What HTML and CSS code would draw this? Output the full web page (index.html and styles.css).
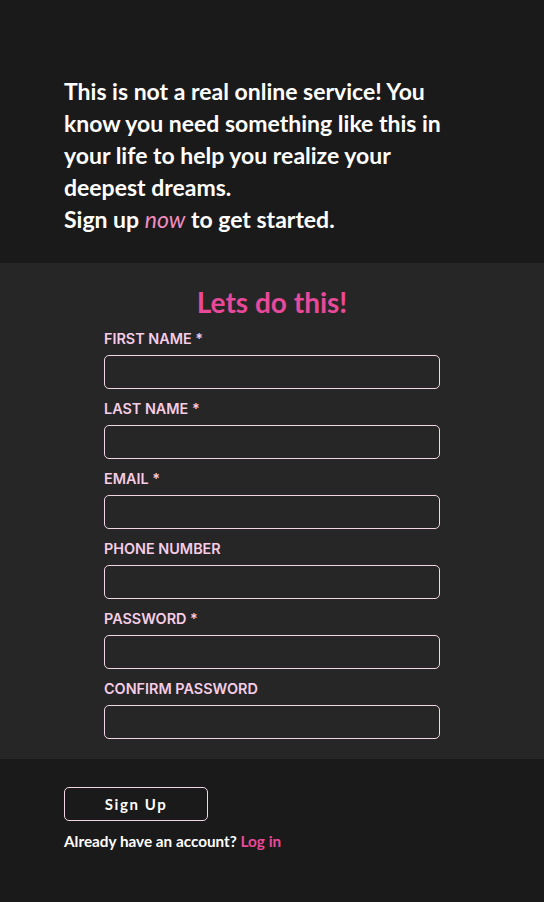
FILE: index.html
```html
<!DOCTYPE html>
<html lang="en">
<head>
<meta charset="utf-8">
<title>Sign up</title>
<link rel="stylesheet" href="styles.css">
</head>
<body>
<header class="hero">
  <p class="hero-text">This is not a real online service! You<br>know you need something like this in<br>your life to help you realize your<br>deepest dreams.<br>Sign up <em class="now">now</em> to get started.</p>
</header>
<main class="form-section">
  <h1 class="form-title">Lets do this!</h1>
  <form class="form" id="signup">
    <div class="field"><label class="label" for="fn">First name *</label><input class="input" id="fn" type="text"></div>
    <div class="field"><label class="label" for="ln">Last name *</label><input class="input" id="ln" type="text"></div>
    <div class="field"><label class="label" for="em">Email *</label><input class="input" id="em" type="email"></div>
    <div class="field"><label class="label" for="ph">Phone number</label><input class="input" id="ph" type="tel"></div>
    <div class="field"><label class="label" for="pw">Password *</label><input class="input" id="pw" type="password"></div>
    <div class="field"><label class="label" for="cp">Confirm password</label><input class="input" id="cp" type="password"></div>
  </form>
</main>
<footer class="footer">
  <button class="btn" form="signup" type="button">Sign Up</button>
  <p class="account">Already have an account? <a class="link" href="#">Log in</a></p>
</footer>
</body>
</html>
```

FILE: styles.css
```css
* { box-sizing: border-box; }
html, body { margin: 0; padding: 0; }
body {
  background: #1a1a1a;
  color: #ffffff;
  font-family: Lato, "Noto Sans", sans-serif;
  min-height: 902px;
}
.hero {
  background: #1a1a1a;
  padding: 75px 64px 28px;
}
.hero-text {
  margin: 0;
  font-size: 23px;
  line-height: 32px;
  font-weight: 700;
  color: #ffffff;
}
.now {
  color: #f08cc0;
  font-style: italic;
  font-weight: 400;
}
.form-section {
  background: #262626;
  padding: 21px 104px 9px;
}
.form-title {
  margin: 0 0 10px;
  text-align: center;
  font-size: 28px;
  line-height: 36px;
  font-weight: 700;
  color: #e8499a;
}
.form { margin: 0; }
.field {
  display: flex;
  flex-direction: column;
  margin-bottom: 11px;
}
.label {
  display: block;
  font-family: Inter, "Noto Sans", sans-serif;
  font-size: 14.4px;
  line-height: 18px;
  font-weight: 600;
  text-transform: uppercase;
  color: #f5cde6;
  margin-bottom: 7px;
}
.input {
  display: block;
  width: 336px;
  height: 34px;
  background: #262626;
  border: 1px solid #f2d6e6;
  border-radius: 5px;
  color: #fff;
  margin: 0;
  padding: 0 8px;
  font: inherit;
}
.footer {
  background: #1a1a1a;
  padding: 28px 64px 40px;
}
.btn {
  display: block;
  width: 144px;
  height: 34px;
  background: #1a1a1a;
  border: 1px solid #f2d6e6;
  border-radius: 5px;
  color: #ffffff;
  font-family: Lato, "Noto Sans", sans-serif;
  font-size: 15px;
  font-weight: 700;
  letter-spacing: 1.6px;
  padding: 0;
}
.account {
  margin: 11px 0 0;
  font-size: 15.3px;
  line-height: 18px;
  font-weight: 700;
  color: #ffffff;
}
.link {
  color: #e8499a;
  text-decoration: none;
}
```
